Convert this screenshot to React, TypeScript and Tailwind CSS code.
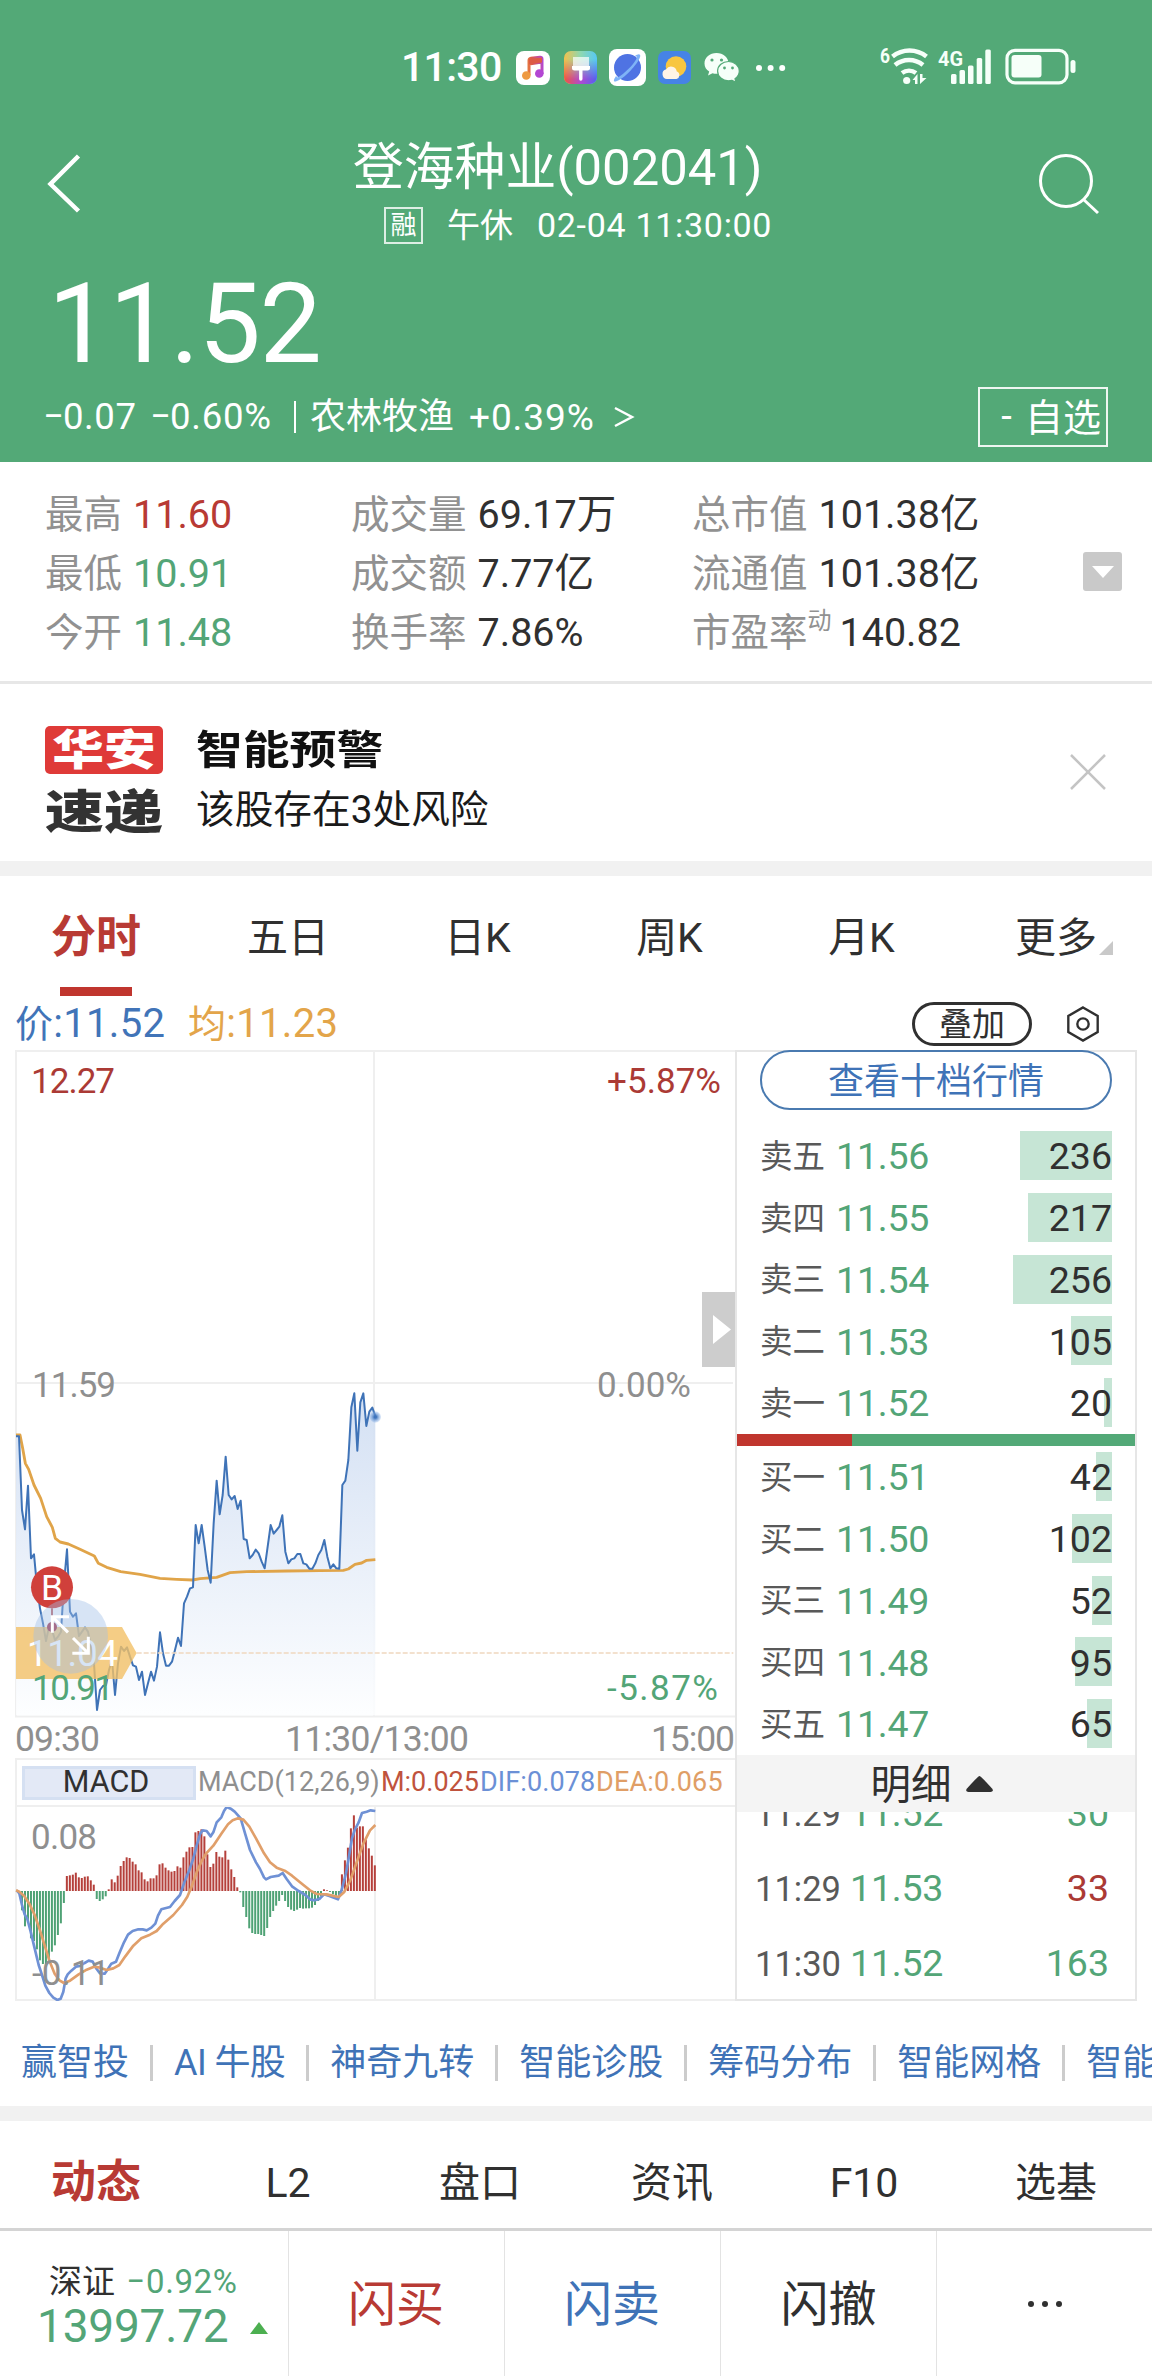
import type { ReactNode } from "react";

const stats = [
    [
        { label: "最高", value: "11.60", color: "text-[#b83a34]" },
        { label: "最低", value: "10.91", color: "text-[#53a577]" },
        { label: "今开", value: "11.48", color: "text-[#53a577]" },
    ],
    [
        { label: "成交量", value: "69.17万", color: "text-[#303030]" },
        { label: "成交额", value: "7.77亿", color: "text-[#303030]" },
        { label: "换手率", value: "7.86%", color: "text-[#303030]" },
    ],
    [
        { label: "总市值", value: "101.38亿", color: "text-[#303030]" },
        { label: "流通值", value: "101.38亿", color: "text-[#303030]" },
        { label: "市盈率", sup: "动", value: "140.82", color: "text-[#303030]" },
    ],
];

const sells = [
    { label: "卖五", price: "11.56", volume: 236 },
    { label: "卖四", price: "11.55", volume: 217 },
    { label: "卖三", price: "11.54", volume: 256 },
    { label: "卖二", price: "11.53", volume: 105 },
    { label: "卖一", price: "11.52", volume: 20 },
];

const buys = [
    { label: "买一", price: "11.51", volume: 42 },
    { label: "买二", price: "11.50", volume: 102 },
    { label: "买三", price: "11.49", volume: 52 },
    { label: "买四", price: "11.48", volume: 95 },
    { label: "买五", price: "11.47", volume: 65 },
];

const trades = [
    { time: "11:29", price: "11.52", volume: 30, up: false },
    { time: "11:29", price: "11.53", volume: 33, up: true },
    { time: "11:30", price: "11.52", volume: 163, up: false },
];

const periodTabs = ["分时", "五日", "日K", "周K", "月K", "更多"];
const infoTabs = ["动态", "L2", "盘口", "资讯", "F10", "选基"];
const tools = ["赢智投", "AI 牛股", "神奇九转", "智能诊股", "筹码分布", "智能网格", "智能"];

const pricePoints =
    "48,199 57,199 66,420 75,478 84,347 93,565 102,553 111,650 120,715 129,760 138,813 147,770 156,780 165,810 174,800 183,785 192,640 201,538 210,725 219,740 228,730 237,798 246,785 255,772 264,785 273,830 282,880 291,1020 300,960 309,948 318,945 327,900 336,870 345,975 354,880 363,830 372,843 381,832 390,860 399,886 408,890 417,930 426,905 435,975 444,940 453,905 462,932 471,890 480,787 489,850 498,887 507,887 516,875 525,840 534,803 543,828 552,700 561,680 570,655 579,652 587,465 596,520 605,465 614,530 623,600 632,638 641,460 650,332 659,433 668,375 677,260 686,375 695,388 704,378 713,417 722,392 731,507 740,510 749,565 758,555 767,539 776,550 785,575 794,595 803,530 812,465 821,491 830,480 838,470 847,436 856,545 865,580 874,568 883,565 892,552 901,552 910,580 919,583 928,596 937,596 946,580 955,555 964,540 973,510 982,560 991,595 1000,583 1009,595 1018,596 1027,345 1036,332 1045,270 1054,112 1063,70 1072,242 1081,97 1090,70 1099,168 1108,125 1117,113 1126,138";

const averagePoints =
    "48,195 60,195 68,235 76,280 86,298 102,345 122,385 140,440 157,472 166,505 180,516 205,522 240,538 283,558 295,580 320,592 362,605 420,613 480,625 530,628 578,630 600,626 650,622 690,608 740,605 860,603 960,602 1030,601 1045,597 1065,583 1085,579 1100,571 1126,569";

const macdBars = [
    -58, -106, -96, -142, -150, -175, -208, -219, -228, -210, -182, -163, -132, -97, -36,
    45, 47, 49, 55, 41, 39, 43, 44, 32, 19, -24, -30, -25, -16,
    5, 35, 26, 46, 75, 90, 101, 99, 88, 80, 62, 56, 35, 29, 38, 38, 47, 80, 83, 70,
    62, 58, 60, 74, 70, 101, 118, 131, 132, 176, 180, 185, 164, 110, 72, 82, 117, 103, 101, 121,
    94, 65, 42, 11, -4, -48, -78, -112, -126, -129, -129, -132, -135, -111, -78,
    -60, -44, -30, -12, -30, -48, -56, -60, -56, -51, -53, -52, -52, -50, -42, -30, -15, 5, 2, -3,
    -10, -15, -20, 50, 92, 130, 188, 227, 190, 194, 194, 154, 128, 106, 77,
];

const difPoints =
    "50,316 58,325 66,360 74,388 82,402 92,440 104,490 116,540 126,570 136,602 148,624 160,638 172,645 182,641 190,620 197,580 203,568 214,557 228,545 240,543 254,534 266,527 278,530 290,552 300,565 314,566 324,552 334,536 348,530 358,505 372,472 384,449 398,438 415,433 428,433 440,436 454,428 466,416 474,392 484,373 510,366 524,348 540,330 552,295 568,255 580,220 590,182 600,148 608,136 620,138 632,154 640,142 650,112 664,97 672,78 680,66 692,71 704,80 722,100 736,148 750,195 768,232 780,252 792,277 798,283 812,276 836,272 848,264 860,282 876,304 896,318 916,330 932,344 944,346 958,342 972,328 990,334 1014,343 1024,318 1038,265 1046,220 1056,160 1064,135 1076,112 1086,84 1100,80 1112,76 1126,78";

const deaPoints =
    "48,316 58,320 72,332 88,356 104,390 120,436 136,488 150,532 164,566 178,586 192,594 210,587 236,568 260,554 282,545 300,548 320,555 340,550 358,540 376,514 400,482 424,460 450,449 470,438 490,416 520,390 546,360 562,335 576,302 590,262 604,230 618,206 640,182 664,146 684,118 698,106 714,100 730,104 748,125 768,160 792,205 810,232 830,248 856,258 876,272 900,292 930,316 950,327 980,328 1016,336 1032,322 1050,288 1070,232 1090,176 1110,136 1126,120";

const Digits = ({ children, className }: { children: ReactNode; className: string }) => (
    <span className={`whitespace-pre ${className}`}>{children}</span>
);

const Minus = () => <span className="inline-block w-[18px] origin-left -translate-y-[2px] scale-x-[1.700]">-</span>;

const StatusBar = () => (
    <div className="flex h-[135px] items-center pl-[401px] text-white">
        <span className="w-[115px] text-[41px] leading-none font-medium tracking-[-0.700px]">11:30</span>
        {/* Music */}
        <svg className="h-[34px] w-[34px]" viewBox="0 0 34 34">
            <defs>
                <linearGradient id="note" gradientUnits="userSpaceOnUse" x1="6" y1="24" x2="28" y2="22">
                    <stop offset="0" stopColor="#f1a23c" />
                    <stop offset="0.5" stopColor="#dd5b45" />
                    <stop offset="1" stopColor="#b347d3" />
                </linearGradient>
            </defs>
            <rect width="34" height="34" rx="8" fill="#fff" />
            <path d="M13 24V9.500q0-2 2-2.300l9-1q2-.2 2 1.800v15M13 13l13-2" fill="none" stroke="url(#note)" strokeWidth="3" />
            <path d="M13 8l13-1.500v5L13 13z" fill="#dd5b45" />
            <circle cx="10.300" cy="24.500" r="4.300" fill="#ee9a43" />
            <circle cx="23.300" cy="22.500" r="4.300" fill="#b347d3" />
        </svg>
        {/* Theme brush */}
        <svg className="ml-[14px] h-[33px] w-[33px]" viewBox="0 0 33 33">
            <defs>
                <linearGradient id="theme" x1="0" y1="0" x2="1" y2="0">
                    <stop offset="0" stopColor="#f2c14c" />
                    <stop offset="0.5" stopColor="#8ed8b0" />
                    <stop offset="1" stopColor="#56c8f5" />
                </linearGradient>
                <linearGradient id="themeLow" x1="0" y1="0" x2="1" y2="0">
                    <stop offset="0" stopColor="#f0563f" />
                    <stop offset="0.5" stopColor="#b04ad0" />
                    <stop offset="1" stopColor="#5360f0" />
                </linearGradient>
                <linearGradient id="fade" x1="0" y1="0" x2="0" y2="1">
                    <stop offset="0.25" stopColor="#000" />
                    <stop offset="0.85" stopColor="#fff" />
                </linearGradient>
                <mask id="themeMask">
                    <rect width="33" height="33" fill="url(#fade)" />
                </mask>
            </defs>
            <rect width="33" height="33" rx="7" fill="url(#theme)" />
            <rect width="33" height="33" rx="7" fill="url(#themeLow)" mask="url(#themeMask)" />
            <path d="M9 6h16v9H9z" fill="#fff" opacity="0.7" />
            <path d="M8 15h18v2.500q0 2-2.500 2h-5v8.500a1.700 1.700 0 0 1-3.400 0v-8.500h-4.600q-2.500 0-2.500-2z" fill="#fff" />
        </svg>
        {/* Browser */}
        <svg className="ml-[12px] h-[37px] w-[37px]" viewBox="0 0 37 37">
            <rect width="37" height="37" rx="8" fill="#fff" />
            <circle cx="18.500" cy="18.500" r="13.500" fill="#4f73e3" />
            <path d="M7 27C1 36 9 33 17 26S34 7 30.500 5.500c-1-.6-3 .5-4.500 1.500 3-.5 2 3-2 8S12 27 8.500 28.500z" fill="#7fb3f7" />
        </svg>
        {/* Weather */}
        <svg className="ml-[12px] h-[33px] w-[33px]" viewBox="0 0 33 33">
            <rect width="33" height="33" rx="7" fill="#4683e6" />
            <circle cx="18" cy="15.500" r="10.300" fill="#f8c640" />
            <path d="M9 28a5 5 0 0 1-.8-9.800 5.800 5.800 0 0 1 10.600 2.200A4 4 0 0 1 18.500 28z" fill="#fff4e6" />
        </svg>
        {/* WeChat */}
        <svg className="ml-[13px] h-[31px] w-[36px]" viewBox="0 0 36 31">
            <path d="M12.500 1C5.800 1 .5 5.600.5 11.400c0 3.400 1.800 6.300 4.700 8.200L4 23.500l4.500-2.300c1.300.4 2.600.6 4 .6 6.700 0 12-4.600 12-10.400S19.200 1 12.500 1z" fill="#f6fff9" />
            <path d="M24.500 9.500c-6 0-10.900 4.100-10.900 9.600s4.900 9.700 10.900 9.700c1.200 0 2.400-.2 3.500-.5l4 2-1-3.600c2.600-1.700 4.300-4.400 4.300-7.600 0-5.500-4.800-9.600-10.800-9.600z" fill="#f6fff9" stroke="#53a977" strokeWidth="1.200" />
            <g fill="#53a977">
                <circle cx="8" cy="8" r="1.600" />
                <circle cx="17.500" cy="8" r="1.600" />
                <circle cx="20.500" cy="16" r="1.400" />
                <circle cx="28.500" cy="16" r="1.400" />
            </g>
        </svg>
        <svg className="ml-[15px] h-[8px] w-[32px]" viewBox="0 0 32 8" fill="#fff">
            <circle cx="4" cy="4" r="3" />
            <circle cx="15.600" cy="4" r="3" />
            <circle cx="27.200" cy="4" r="3" />
        </svg>
        {/* Network and battery */}
        <svg className="ml-[93px] h-[40px] w-[200px] overflow-visible" viewBox="0 0 200 40">
            <g fill="none" stroke="#f6fff9" strokeWidth="4.500">
                <path d="M12.500 8.500a27 27 0 0 1 34 0" />
                <path d="M15 17a22 22 0 0 1 28 0" />
                <path d="M22 25a12 12 0 0 1 14 0" />
            </g>
            <g fill="#f6fff9">
                <circle cx="26.700" cy="32.500" r="3.600" />
                <path d="M32.500 32l5-6v10H35v-4zM40 36V26h2.500v4h4z" />
                <text x="0" y="15" fontSize="20" fontWeight="700" textLength="10" lengthAdjust="spacingAndGlyphs">6</text>
                <text x="58" y="18" fontSize="21" fontWeight="700" textLength="25" lengthAdjust="spacingAndGlyphs">4G</text>
                <rect x="71" y="26" width="5.500" height="10" rx="1.500" />
                <rect x="79.500" y="22" width="5.500" height="14" rx="1.500" />
                <rect x="88" y="17.500" width="5.500" height="18.500" rx="1.500" />
                <rect x="96.700" y="10" width="5.500" height="26" rx="1.500" />
                <rect x="105.300" y="1.500" width="5.500" height="34.500" rx="1.500" />
                <rect x="131.500" y="7" width="30" height="22.500" rx="3" />
                <rect x="190.500" y="12" width="5" height="13" rx="2.500" />
            </g>
            <rect x="127" y="2.300" width="60" height="32.500" rx="8" fill="none" stroke="#f6fff9" strokeWidth="3.200" />
        </svg>
    </div>
);

const Header = () => (
    <header className="h-[462px] bg-[#53a977] text-white">
        <StatusBar />
        <div className="flex h-[119px]">
            <svg className="mt-[18px] ml-[46px] h-[60px] w-[60px]" viewBox="0 0 60 60" fill="none" stroke="#fff" strokeWidth="4.500">
                <path d="M32.500 3L4.500 31 32.500 58" />
            </svg>
            <div className="ml-[247px] w-[685px] whitespace-nowrap">
                <h1 className="mt-[3px] text-[50.800px] leading-[60px]">登海种业(002041)</h1>
                <div className="mt-[8px] ml-[31px] flex h-[38px] items-center text-[33px] leading-none">
                    <span className="flex h-[37px] w-[39px] items-center justify-center border-2 border-white/80 text-[26px]">融</span>
                    <span className="ml-[24px]">午休</span>
                    <Digits className="ml-[24px] text-[34px] tracking-[0.700px]">02-04 11:30:00</Digits>
                </div>
            </div>
            <svg className="mt-[17px] h-[64px] w-[64px]" viewBox="0 0 64 64" fill="none" stroke="#fff" strokeWidth="3">
                <circle cx="28" cy="29" r="25.500" />
                <path d="M45 47l15 14" />
            </svg>
        </div>
        <div className="mt-[15px] ml-[48px] h-[110px] text-[111px] leading-[110px] tracking-[-1.200px]">11.52</div>
        <div className="mt-[8px] flex h-[60px] items-center text-[36.500px] leading-none whitespace-nowrap">
            <span className="ml-[45px] w-[107px] tracking-[0.600px]">
                <Minus />0.07
            </span>
            <span className="w-[142px] tracking-[0.800px]">
                <Minus />0.60%
            </span>
            <span className="h-[32px] w-[2px] bg-white" />
            <span className="ml-[14px] text-[36px]">农林牧渔</span>
            <span className="ml-[15px] text-[37px] tracking-[0.900px]">+0.39%</span>
            <svg className="ml-[18px] h-[24px] w-[22px]" viewBox="0 0 22 24" fill="none" stroke="#fff" strokeWidth="2.500">
                <path d="M2 3l17 9-17 9" />
            </svg>
            <button className="mr-[44px] ml-auto flex h-[60px] w-[130px] items-center border-2 border-white/90 pt-[2px] pl-[16px] text-[38px]">
                <span className="w-[29px] -translate-x-[4px] -translate-y-[2px]">-</span>
                自选
            </button>
        </div>
    </header>
);

const Stats = () => (
    <section className="flex h-[222px] border-b-[3px] border-[#e7e7e7] pt-[23px] text-[38.500px] leading-[59px] whitespace-nowrap">
        {stats.map((column, i) => (
            <div key={i} className={i === 0 ? "ml-[45px] w-[306px]" : i === 1 ? "w-[341px]" : "w-[391px]"}>
                {column.map((item) => (
                    <div key={item.label} className="flex">
                        <span className="text-[#919191]">{item.label}</span>
                        {item.sup && <span className="text-[24px] leading-[36px] text-[#919191]">{item.sup}</span>}
                        <span className={`text-[39.500px] ${item.sup ? "ml-[8px]" : "ml-[11px]"} ${item.color}`}>{item.value}</span>
                    </div>
                ))}
            </div>
        ))}
        <div className="mt-[67px] flex h-[39px] w-[39px] items-center justify-center rounded-[3px] bg-[#c9c9c9]">
            <svg className="h-[12px] w-[22px]" viewBox="0 0 22 12" fill="#fff">
                <path d="M0 0h22L11 12z" />
            </svg>
        </div>
    </section>
);

const AlertCard = () => (
    <section className="flex h-[192px] border-b-[15px] border-[#f1f1f1]">
        <div className="mt-[42px] ml-[45px] flex w-[118px] flex-col items-center font-black">
            <div className="flex h-[48px] w-full items-center justify-center rounded-[5px] bg-[#df3a38] text-[42px] leading-[48px] text-white">
                <span className="translate-y-[1px] scale-x-[1.230]">华安</span>
            </div>
            <span className="mt-[10px] scale-x-[1.280] text-[46px] leading-[56px] text-[#333]">速递</span>
        </div>
        <div className="ml-[33px]">
            <h2 className="mt-[42px] origin-left scale-x-[1.170] text-[40px] leading-[50px] font-bold text-[#111]">智能预警</h2>
            <p className="mt-[9px] text-[38.700px] leading-[50px] text-[#1a1a1a]">该股存在3处风险</p>
        </div>
        <svg className="mt-[70px] mr-[46px] ml-auto h-[36px] w-[36px]" viewBox="0 0 36 36" stroke="#c4c4c4" strokeWidth="2.500">
            <path d="M1 1l34 34M35 1L1 35" />
        </svg>
    </section>
);

const PeriodTabs = () => (
    <nav className="flex h-[120px] text-[41px] leading-[50px] text-[#303030]">
        {periodTabs.map((tab, i) => (
            <div
                key={tab}
                className={`relative flex w-[192px] flex-col items-center pt-[37px] ${i === 0 ? "text-[45px] font-bold text-[#b83a34]" : i === 1 || i === 5 ? "" : "pr-[5px]"}`}
            >
                {tab}
                {i === 0 && <span className="mt-[24px] h-[9px] w-[72px] bg-[#c0352e]" />}
                {i === 5 && (
                    <svg className="absolute top-[65px] right-[39px] h-[14px] w-[14px]" viewBox="0 0 14 14" fill="#c9c9c9">
                        <path d="M14 0v14H0z" />
                    </svg>
                )}
            </div>
        ))}
    </nav>
);

const PriceBar = () => (
    <div className="flex h-[54px] items-center pt-[2px] text-[40px] leading-none">
        <span className="ml-[15px] w-[173px] tracking-[0.300px] text-[#4174b8]">
            <span className="text-[38px]">价</span>:11.52
        </span>
        <span className="tracking-[0.300px] text-[#e3a54a]">
            <span className="text-[38px]">均</span>:11.23
        </span>
        <button className="mb-[1px] ml-auto flex h-[44px] w-[120px] items-center justify-center rounded-full border-[3px] border-[#303030] pt-[2px] text-[33px] text-[#303030]">
            叠加
        </button>
        <svg className="mr-[52px] ml-[34px] h-[36px] w-[34px]" viewBox="0 0 34 38" fill="none" stroke="#303030" strokeWidth="2.500">
            <path d="M17 1.500l15.500 9v17L17 36.500l-15.500-9v-17z" />
            <circle cx="17" cy="19" r="6" />
        </svg>
    </div>
);

const PriceChart = () => (
    <svg className="block h-[708px] w-[720px]" viewBox="0 0 720 708" fontSize="35">
        <defs>
            <linearGradient id="area" x1="0" y1="0" x2="0" y2="1">
                <stop offset="0" stopColor="#cfddf2" stopOpacity="0.900" />
                <stop offset="1" stopColor="#fdfeff" stopOpacity="0.900" />
            </linearGradient>
            <radialGradient id="dot">
                <stop offset="0.200" stopColor="#3f74bc" />
                <stop offset="1" stopColor="#8db4ea" stopOpacity="0.300" />
            </radialGradient>
        </defs>
        <g fill="none" stroke="#efefef" strokeWidth="2">
            <path d="M1 0v667M0 1h720M0 333h718M0 666.500h720M359 0v667" />
        </g>
        <g transform="translate(-15 320) scale(0.33333)">
            <polygon points={`48,1036 ${pricePoints} 1126,1036`} fill="url(#area)" />
            <polyline points={averagePoints} fill="none" stroke="#e0a449" strokeWidth="8.500" strokeLinejoin="round" />
            <polyline points={pricePoints} fill="none" stroke="#3f73b7" strokeWidth="6" strokeLinejoin="round" />
            <circle cx="1126" cy="141" r="17" fill="url(#dot)" />
            <path d="M410 849H2200" stroke="#efd7bf" strokeWidth="4.500" strokeDasharray="15 6" />
            {/* Previous trade price tag */}
            <path d="M48 771h318l44 78-44 78H48z" fill="#f2c067" opacity="0.800" />
        </g>
        <g>
            <text x="16" y="43" fill="#ab3a35" textLength="84">12.27</text>
            <text x="592" y="43" fill="#ab3a35" textLength="114">+5.87%</text>
            <text x="17" y="347" fill="#8f8f8f" textLength="84">11.59</text>
            <text x="582" y="347" fill="#8f8f8f" textLength="94">0.00%</text>
            <text x="17" y="650" fill="#53a577" textLength="82">10.91</text>
            <text x="592" y="650" fill="#53a577" textLength="111">-5.87%</text>
            <text x="12" y="616" fill="#fff" fontSize="37" textLength="91">11.04</text>
        </g>
        {/* Buy marker and expand handle */}
        <g transform="translate(-15 320) scale(0.33333)">
            <path d="M156 715v60" stroke="#b0474b" strokeWidth="5" />
            <circle cx="156" cy="771" r="15" fill="#a8364a" />
            <circle cx="156" cy="652" r="63" fill="#d0403b" />
            <text x="123" y="690" fontSize="106" fill="#fff">B</text>
            <circle cx="212" cy="799" r="112" fill="#9fbfe6" opacity="0.420" />
            <g fill="none" stroke="#fff" strokeWidth="9">
                <path d="M157 788v-48h50M158 741l46 46" />
                <path d="M265 800v50h-48M264 849l-45-45" />
            </g>
        </g>
        <g fill="#8f8f8f" fontSize="35.500">
            <text x="0" y="701" textLength="85">09:30</text>
            <text x="270" y="701" textLength="184">11:30/13:00</text>
            <text x="636" y="701" textLength="84">15:00</text>
        </g>
        <rect x="687" y="242" width="33" height="75" fill="#cdcdcd" />
        <path d="M698 265v29l18-14.500z" fill="#fff" />
    </svg>
);

const MacdBar = () => (
    <div className="flex h-[49px] items-center border-y-2 border-l-2 border-[#efefef] text-[27px] leading-none whitespace-nowrap">
        <span className="ml-[5px] flex h-[34px] w-[174px] items-center justify-center border-[3px] border-[#d5e0f2] bg-[#e3e9f6] pr-[6px] text-[30.500px] text-[#303030]">
            MACD
        </span>
        <span className="ml-[2px] w-[183px] text-[#8f8f8f]">MACD(12,26,9)</span>
        <span className="w-[99px] text-[#c0533d]">M:0.025</span>
        <span className="w-[116px] tracking-[0.100px] text-[#6b90d6]">DIF:0.078</span>
        <span className="tracking-[0.200px] text-[#e09e66]">DEA:0.065</span>
    </div>
);

const MacdChart = () => (
    <svg className="block h-[194px] w-[720px]" viewBox="0 0 720 194" fontSize="35">
        <path d="M1 0v194M0 193h720M360 0v194" fill="none" stroke="#efefef" strokeWidth="2" />
        <g transform="translate(-15 -22) scale(0.33333)">
            {macdBars.map((value, i) => (
                <rect
                    key={i}
                    x={63 + i * 8.97}
                    y={value > 0 ? 318 - value : 318}
                    width="6"
                    height={Math.abs(value)}
                    fill={value > 0 ? "#b5403b" : "#4fa275"}
                />
            ))}
        </g>
        <g transform="translate(-15 -22) scale(0.33333)" fill="none" strokeWidth="8" strokeLinejoin="round">
            <polyline points={difPoints} stroke="#6f91d5" />
            <polyline points={deaPoints} stroke="#e09f6a" />
        </g>
        <g fill="#8f8f8f">
            <text x="16" y="42" textLength="66">0.08</text>
            <text x="17" y="178" textLength="78">-0.11</text>
        </g>
    </svg>
);

const OrderRow = ({ label, price, volume }: { label: string; price: string; volume: number }) => (
    <div className="relative flex h-[49px] items-center pt-[3px] text-[37.500px] leading-none">
        <span className="w-[76px] text-[32.500px] text-[#595959]">{label}</span>
        <span className="tracking-[-0.200px] text-[#53a577]">{price}</span>
        <span
            className="absolute top-0 right-0 h-full bg-[#c6e5d5]"
            style={{ width: Math.round(volume * 0.388) }}
        />
        <span className="relative ml-auto text-[#303030]">{volume}</span>
    </div>
);

const OrderBook = () => (
    <aside className="flex h-[951px] w-[402px] flex-col border-2 border-[#e6e6e6]">
        <button className="-mt-[2px] ml-[23px] h-[60px] w-[352px] shrink-0 rounded-full border-2 border-[#4a7ab0] pt-[3px] text-[36px] leading-none text-[#3f73b7]">
            查看十档行情
        </button>
        <div className="mt-[21px] mr-[23px] ml-[23px] flex flex-col gap-[12.750px]">
            {sells.map((row) => (
                <OrderRow key={row.label} {...row} />
            ))}
        </div>
        <div className="mt-[7px] flex h-[12px] shrink-0">
            <span className="w-[115px] bg-[#c0352e]" />
            <span className="flex-1 bg-[#53a977]" />
        </div>
        <div className="mt-[6px] mr-[23px] ml-[23px] flex flex-col gap-[12.750px]">
            {buys.map((row) => (
                <OrderRow key={row.label} {...row} />
            ))}
        </div>
        <div className="mt-[7px] flex h-[57px] shrink-0 items-center justify-center bg-[#f4f4f4] pt-[3px] pr-[9px] text-[40.500px] leading-none text-[#303030]">
            明细
            <svg className="mb-[3px] ml-[14px] h-[16px] w-[27px]" viewBox="0 0 27 16" fill="#303030">
                <path d="M13.500 0Q15 .3 26.500 13q1 3-2 3H2.500q-3 0-2-3Q12 .3 13.500 0z" />
            </svg>
        </div>
        <div className="flex flex-1 flex-col justify-end overflow-hidden">
            {trades.map((trade, i) => (
                <div key={i} className="mr-[26px] ml-[18px] flex h-[75px] shrink-0 items-center pt-[5px] text-[37.500px] leading-none">
                    <span className="w-[95px] text-[34.500px] text-[#595959]">{trade.time}</span>
                    <span className="tracking-[-0.200px] text-[#53a577]">{trade.price}</span>
                    <span className={`ml-auto ${trade.up ? "text-[#ab3a35]" : "text-[#53a577]"}`}>{trade.volume}</span>
                </div>
            ))}
        </div>
    </aside>
);

const ToolLinks = () => (
    <div className="flex h-[120px] items-center overflow-hidden border-b-[15px] border-[#f1f1f1] pt-[18px] pl-[21px] text-[36px] leading-none whitespace-nowrap text-[#3f73b7]">
        {tools.map((tool, i) => (
            <div key={i} className="flex shrink-0 items-center">
                {i > 0 && <span className="mx-[21px] h-[36px] w-[3px] bg-[#cccccc]" />}
                <span className={i === 1 ? "tracking-[-0.600px]" : ""}>{tool}</span>
            </div>
        ))}
    </div>
);

const InfoTabs = () => (
    <nav className="flex h-[110px] border-b-[3px] border-[#d4d4d4] text-[41px] leading-[50px] text-[#303030]">
        {infoTabs.map((tab, i) => (
            <div key={tab} className={`w-[192px] pt-[37px] text-center ${i === 0 ? "text-[45px] font-bold text-[#b83a34]" : ""}`}>
                {tab}
            </div>
        ))}
    </nav>
);

const BottomBar = () => (
    <footer className="flex h-[145px] divide-x divide-[#e3e3e3] text-[48px] leading-none">
        <div className="w-[289px] whitespace-nowrap text-[#53a577]">
            <div className="mt-[31px] ml-[49px] flex h-[38px] items-center text-[33px]">
                <span className="text-[#303030]">深证</span>
                <span className="ml-[13px] tracking-[0.600px]">
                    <Minus />0.92%
                </span>
            </div>
            <div className="mt-[1px] ml-[37px] flex h-[50px] items-center text-[46px] tracking-[-0.200px]">
                13997.72
                <svg className="mt-[4px] ml-[21px] h-[12px] w-[18px]" viewBox="0 0 18 12" fill="#4caf50">
                    <path d="M9 0l9 12H0z" />
                </svg>
            </div>
        </div>
        <button className="w-[216px] pt-[3px] pr-[1px] text-[#b83a34]">闪买</button>
        <button className="w-[216px] pt-[3px] pr-[1px] text-[#3f73b7]">闪卖</button>
        <button className="w-[216px] pt-[3px] text-[#303030]">闪撤</button>
        <button className="flex flex-1 items-center justify-center">
            <svg className="h-[8px] w-[36px]" viewBox="0 0 36 8" fill="#303030">
                <circle cx="4" cy="4" r="3" />
                <circle cx="18" cy="4" r="3" />
                <circle cx="32" cy="4" r="3" />
            </svg>
        </button>
    </footer>
);

const App = () => {
    return (
        <div className="h-[2376px] w-[1152px] overflow-hidden bg-white font-[Roboto,'Noto_Sans_CJK_SC',sans-serif]">
            <Header />
            <Stats />
            <AlertCard />
            <PeriodTabs />
            <PriceBar />
            <main className="flex h-[951px] pl-[15px]">
                <div className="w-[720px]">
                    <PriceChart />
                    <MacdBar />
                    <MacdChart />
                </div>
                <OrderBook />
            </main>
            <ToolLinks />
            <InfoTabs />
            <BottomBar />
        </div>
    );
};

export default App;
